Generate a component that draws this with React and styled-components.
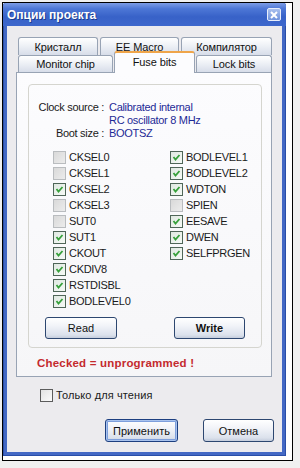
import React from "react";
import styled, { createGlobalStyle } from "styled-components";

const GlobalStyle = createGlobalStyle`
  html, body {
    margin: 0;
    padding: 0;
    background: #f0f0f0;
  }
  body {
    font-family: "Liberation Sans", Arial, sans-serif;
    font-size: 11px;
    letter-spacing: -0.3px;
    color: #1a1a1a;
  }
`;

const leftBits = [
  ["CKSEL0", false],
  ["CKSEL1", false],
  ["CKSEL2", true],
  ["CKSEL3", false],
  ["SUT0", false],
  ["SUT1", true],
  ["CKOUT", true],
  ["CKDIV8", true],
  ["RSTDISBL", true],
  ["BODLEVEL0", true],
];

const rightBits = [
  ["BODLEVEL1", true],
  ["BODLEVEL2", true],
  ["WDTON", true],
  ["SPIEN", false],
  ["EESAVE", true],
  ["DWEN", true],
  ["SELFPRGEN", true],
];

function CheckBox({ checked, plain }) {
  return (
    <Box $checked={checked} $plain={plain}>
      {checked && (
        <svg width="9" height="9" viewBox="0 0 9 9">
          <polyline
            points="1.5,4 3.5,6.5 7.5,2"
            fill="none"
            stroke="#36a03a"
            strokeWidth="1.8"
          />
        </svg>
      )}
    </Box>
  );
}

function App() {
  return (
    <Screen>
      <GlobalStyle />
      <Backdrop>
        <Window>
          <TitleBar>
            <Title>Опции проекта</Title>
            <CloseButton>
              <svg width="8" height="8" viewBox="0 0 8 8">
                <path d="M1 1 L7 7 M7 1 L1 7" stroke="#fff" strokeWidth="2" />
              </svg>
            </CloseButton>
          </TitleBar>
          <Body>
            <TabStrip>
              <TabRow>
                <Tab $w={80}>Кристалл</Tab>
                <Tab $w={79}>EE Macro</Tab>
                <Tab $w={91}>Компилятор</Tab>
              </TabRow>
              <TabRow>
                <Tab $w={95}>Monitor chip</Tab>
                <ActiveTab>Fuse bits</ActiveTab>
                <Tab $w={76}>Lock bits</Tab>
              </TabRow>
            </TabStrip>
            <Panel>
              <GroupBox>
                <InfoGrid>
                  <InfoLabel>Clock source :</InfoLabel>
                  <InfoValue>
                    Calibrated internal
                    <br />
                    RC oscillator 8 MHz
                  </InfoValue>
                  <InfoLabel>Boot size :</InfoLabel>
                  <InfoValue>BOOTSZ</InfoValue>
                </InfoGrid>
                <BitColumns>
                  <BitColumn>
                    {leftBits.map(([name, on]) => (
                      <CheckRow key={name}>
                        <CheckBox checked={on} />
                        <span>{name}</span>
                      </CheckRow>
                    ))}
                  </BitColumn>
                  <BitColumn>
                    {rightBits.map(([name, on]) => (
                      <CheckRow key={name}>
                        <CheckBox checked={on} />
                        <span>{name}</span>
                      </CheckRow>
                    ))}
                  </BitColumn>
                </BitColumns>
                <GroupButtons>
                  <Button $w={72}>Read</Button>
                  <Button $w={71} $bold>
                    Write
                  </Button>
                </GroupButtons>
              </GroupBox>
              <Note>Checked = unprogrammed !</Note>
            </Panel>
            <ReadOnlyRow>
              <CheckBox plain />
              <span>Только для чтения</span>
            </ReadOnlyRow>
            <DialogButtons>
              <Button $w={73} $h={23} $default>
                Применить
              </Button>
              <Button $w={71} $h={23}>
                Отмена
              </Button>
            </DialogButtons>
          </Body>
        </Window>
      </Backdrop>
    </Screen>
  );
}

const Screen = styled.div`
  width: 300px;
  height: 468px;
  padding: 2px 0 0 2px;
  box-sizing: border-box;
`;

const Backdrop = styled.div`
  width: 291px;
  height: 459px;
  box-sizing: border-box;
  border: 1px solid #000;
  background: #fff;
`;

const Window = styled.div`
  width: 283px;
  height: 453px;
  box-sizing: border-box;
  display: flex;
  flex-direction: column;
  background: #4368c4;
  border-radius: 3px 3px 0 0;
  padding: 0 4px 4px;
  box-shadow: inset 1px 0 0 #2a4ea8, inset -1px 0 0 #2a4ea8,
    inset 0 -1px 0 #2a4ea8;
`;

const TitleBar = styled.div`
  height: 23px;
  margin: 0 -4px;
  padding: 0 5px 0 4px;
  display: flex;
  align-items: center;
  justify-content: space-between;
  border-radius: 3px 3px 0 0;
  background: linear-gradient(
    180deg,
    #7d9de6 0%,
    #4d77d6 25%,
    #3862c8 60%,
    #3d67cc 100%
  );
`;

const Title = styled.div`
  color: #fff;
  font-weight: bold;
  font-size: 12px;
  letter-spacing: 0;
  text-shadow: 1px 1px 0 #1d3c8c;
`;

const CloseButton = styled.div`
  width: 12px;
  height: 11px;
  display: flex;
  align-items: center;
  justify-content: center;
  border: 1px solid #e8eefb;
  border-radius: 2px;
  background: linear-gradient(180deg, #a9c0ee, #6f92dc);
`;

const Body = styled.div`
  flex: 1;
  display: flex;
  flex-direction: column;
  background: #ecebee;
  padding-top: 11px;
`;

const TabStrip = styled.div`
  margin-left: 11px;
  display: flex;
  flex-direction: column;
`;

const TabRow = styled.div`
  display: flex;
  gap: 0 1px;
  align-items: flex-end;
  height: 17px;

  &:first-child {
    height: 18px;
    gap: 2px;
  }
`;

const Tab = styled.div`
  width: ${(p) => p.$w}px;
  height: 100%;
  box-sizing: border-box;
  display: flex;
  align-items: center;
  justify-content: center;
  border: 1px solid #98a3b4;
  border-bottom: none;
  border-radius: 3px 3px 0 0;
  background: linear-gradient(180deg, #ffffff 0%, #eef1f6 45%, #d7dde9 100%);
  color: #111;
  letter-spacing: -0.1px;
`;

const ActiveTab = styled.div`
  position: relative;
  z-index: 2;
  width: 81px;
  height: 22px;
  margin-bottom: -1px;
  box-sizing: border-box;
  display: flex;
  align-items: center;
  justify-content: center;
  padding-bottom: 3px;
  border: 1px solid #98a3b4;
  border-top: 2px solid #efa54a;
  border-bottom: none;
  border-radius: 3px 3px 0 0;
  background: #fcfcfe;
  color: #111;
  letter-spacing: -0.1px;
`;

const Panel = styled.div`
  margin-left: 9px;
  width: 256px;
  height: 305px;
  box-sizing: border-box;
  border: 1px solid #98a3b4;
  background: linear-gradient(180deg, #fcfcfe 0%, #f6f6f8 100%);
  padding: 11px 0 0 11px;
  display: flex;
  flex-direction: column;
`;

const GroupBox = styled.div`
  width: 234px;
  height: 264px;
  box-sizing: border-box;
  border: 1px solid #d5d5cf;
  border-radius: 4px;
  padding: 16px 0 0 0;
  display: flex;
  flex-direction: column;
`;

const InfoGrid = styled.div`
  display: grid;
  grid-template-columns: 75px auto;
  column-gap: 5px;
  line-height: 13px;
`;

const InfoLabel = styled.div`
  text-align: right;
  color: #1a1a1a;
  white-space: nowrap;
`;

const InfoValue = styled.div`
  color: #1e2a96;
  white-space: nowrap;
`;

const BitColumns = styled.div`
  display: grid;
  grid-template-columns: 117px auto;
  margin: 9px 0 0 24px;
`;

const BitColumn = styled.div`
  display: flex;
  flex-direction: column;
`;

const CheckRow = styled.div`
  height: 16px;
  display: flex;
  align-items: center;
  gap: 3px;
  color: #1a1a1a;
  white-space: nowrap;
`;

const Box = styled.div`
  width: 13px;
  height: 13px;
  box-sizing: border-box;
  flex: none;
  display: flex;
  align-items: center;
  justify-content: center;
  border: 1px solid
    ${(p) => (p.$plain ? "#5c5c5c" : p.$checked ? "#4f6658" : "#b9bcbf")};
  background: ${(p) =>
    p.$plain
      ? "linear-gradient(135deg, #e2e2e2, #fbfbfb)"
      : p.$checked
      ? "linear-gradient(135deg, #dfe8e1, #f6faf6)"
      : "linear-gradient(135deg, #d9d9d9, #ececec)"};
`;

const GroupButtons = styled.div`
  display: flex;
  gap: 57px;
  margin: 8px 0 0 16px;
`;

const Button = styled.div`
  width: ${(p) => p.$w}px;
  height: ${(p) => p.$h || 22}px;
  box-sizing: border-box;
  display: flex;
  align-items: center;
  justify-content: center;
  border: 1px solid ${(p) => (p.$default ? "#1d3f80" : "#2d4770")};
  border-radius: 3px;
  background: linear-gradient(180deg, #ffffff 0%, #f1f3f8 40%, #dbe1ec 85%, #c5cddc 100%);
  box-shadow: ${(p) =>
    p.$default ? "inset 0 0 0 1px #a9c3ee, inset 0 0 0 2px #7e9fdc" : "none"};
  font-weight: ${(p) => (p.$bold ? "bold" : "normal")};
  color: #111;
  letter-spacing: 0;
`;

const Note = styled.div`
  margin: 9px 0 0 9px;
  line-height: 13px;
  font-size: 11.5px;
  color: #c42a2e;
  font-weight: bold;
  letter-spacing: 0.2px;
`;

const ReadOnlyRow = styled.div`
  display: flex;
  align-items: center;
  gap: 3px;
  margin: 11px 0 0 33px;
  height: 14px;
  color: #1a1a1a;
  letter-spacing: 0.1px;
`;

const DialogButtons = styled.div`
  display: flex;
  justify-content: flex-end;
  gap: 25px;
  margin: 17px 8px 0 0;
`;

export default App;
